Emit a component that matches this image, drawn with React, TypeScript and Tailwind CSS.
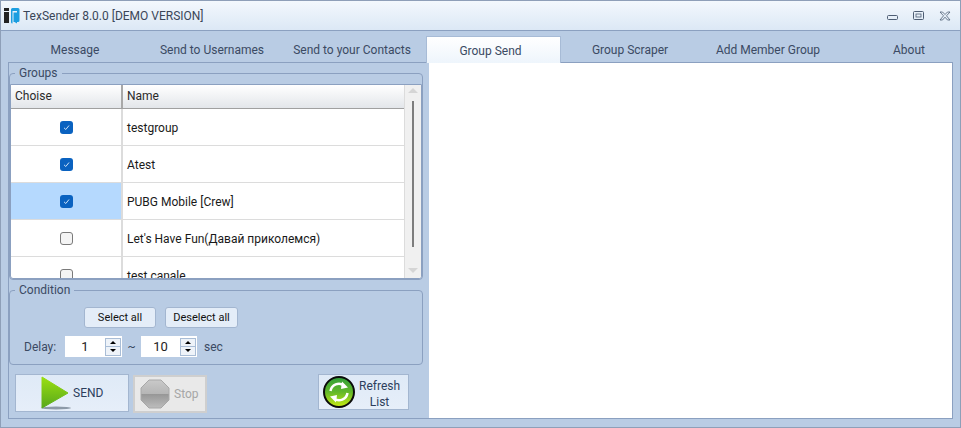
import { useState } from 'react'

const font = 'font-["Roboto","Open_Sans",sans-serif]'

const groups = [
  { name: 'testgroup', checked: true },
  { name: 'Atest', checked: true },
  { name: 'PUBG Mobile [Crew]', checked: true, selected: true },
  { name: "Let's Have Fun(Давай приколемся)", checked: false },
  { name: 'test canale', checked: false },
]

const tabs = [
  { label: 'Message', cls: 'w-[138px]' },
  { label: 'Send to Usernames', cls: 'w-[136px]' },
  { label: 'Send to your Contacts', cls: 'w-[144px] mr-[2px]' },
  { label: 'Group Send', cls: 'w-[135px] pr-[6px]', active: true },
  { label: 'Group Scraper', cls: 'w-[138px]' },
  { label: 'Add Member Group', cls: 'w-[138px]' },
  { label: 'About', cls: 'w-[144px] shrink-0' },
]

function Logo() {
  return (
    <svg width="18" height="16" viewBox="0 0 18 16" className="mt-[1px]">
      <rect x="1" y="0" width="5" height="3" fill="#222" />
      <rect x="1" y="4" width="5" height="11" fill="#222" />
      <path d="M8 1.500 Q8 0 9.500 0 H15 Q16.500 0 16.500 1.500 V12.500 Q16.500 14 15 14 L14 14 V15.500 L11.500 14 H10.500 V4.500 H14 V3 H9.500 V15.500 Q8 15.500 8 14 Z" fill="#1b9ee0" />
    </svg>
  )
}

function WindowButtons() {
  return (
    <div className="flex items-center gap-[15px] text-[#4d5d73]">
      <svg width="11" height="10" viewBox="0 0 11 10"><rect x="0.500" y="4.500" width="10" height="4" rx="1" fill="none" stroke="currentColor" /></svg>
      <svg width="11" height="10" viewBox="0 0 11 10"><rect x="0.500" y="0.500" width="10" height="8" rx="1" fill="none" stroke="currentColor" /><rect x="3" y="3" width="5" height="3" fill="none" stroke="currentColor" strokeWidth="0.800" /></svg>
      <svg width="12" height="10" viewBox="0 0 12 10"><path d="M1 1h2.500l2.500 2.500L8.500 1H11L7.500 4.800 11 9H8.500L6 6.200 3.500 9H1L4.500 4.800Z" fill="none" stroke="currentColor" strokeWidth="0.800" /></svg>
    </div>
  )
}

function Check({ checked }: { checked: boolean }) {
  if (!checked) {
    return <span className="block w-[13px] h-[13px] rounded-[3px] border border-[#7a7a7a] bg-[#f4f4f4]" />
  }
  return (
    <span className="flex items-center justify-center w-[13px] h-[13px] rounded-[3px] bg-[#0a62c0]">
      <svg width="9" height="9" viewBox="0 0 9 9"><path d="M2 4.800 L3.800 6.500 L7 2.500" fill="none" stroke="#cfe2f7" strokeWidth="1" /></svg>
    </span>
  )
}

function Spinner({ value, inputWidth }: { value: string; inputWidth: string }) {
  return (
    <div className="flex h-[21px] bg-white">
      <div className={`${inputWidth} text-center text-[13px] leading-[21px] text-[#222]`}>{value}</div>
      <div className="flex flex-col justify-center w-[16px] mr-[1px]">
        <span className="flex items-center justify-center h-[9px] border border-[#a9bdd6] bg-[#eef3f9]">
          <span className="w-0 h-0 border-x-[3px] border-x-transparent border-b-[3px] border-b-black" />
        </span>
        <span className="flex items-center justify-center h-[9px] border border-t-0 border-[#a9bdd6] bg-[#eef3f9]">
          <span className="w-0 h-0 border-x-[3px] border-x-transparent border-t-[3px] border-t-black" />
        </span>
      </div>
    </div>
  )
}

function PlayIcon() {
  return (
    <svg width="32" height="34" viewBox="0 0 32 34">
      <defs>
        <linearGradient id="play" x1="0" y1="0" x2="0" y2="1">
          <stop offset="0" stopColor="#9adf10" />
          <stop offset="1" stopColor="#58a81c" />
        </linearGradient>
      </defs>
      <ellipse cx="16" cy="32" rx="15" ry="1.500" fill="#8d9aa8" />
      <path d="M2 1 L28 17 L2 32 Z" fill="url(#play)" strokeLinejoin="round" stroke="url(#play)" strokeWidth="1" />
    </svg>
  )
}

function StopIcon() {
  return (
    <svg width="30" height="30" viewBox="0 0 30 30">
      <defs>
        <linearGradient id="stop" x1="0" y1="0" x2="0" y2="1">
          <stop offset="0" stopColor="#c9c9c9" />
          <stop offset="0.500" stopColor="#b5b5b5" />
          <stop offset="0.510" stopColor="#979797" />
          <stop offset="1" stopColor="#bdbdbd" />
        </linearGradient>
      </defs>
      <path d="M9 1 H21 L29 9 V21 L21 29 H9 L1 21 V9 Z" fill="url(#stop)" stroke="#a8a8a8" />
    </svg>
  )
}

function RefreshIcon() {
  return (
    <svg width="32" height="32" viewBox="0 0 32 32">
      <defs>
        <linearGradient id="ref" x1="0" y1="0" x2="0" y2="1">
          <stop offset="0" stopColor="#2f9e3a" />
          <stop offset="0.500" stopColor="#63b82a" />
          <stop offset="1" stopColor="#c8ec12" />
        </linearGradient>
      </defs>
      <circle cx="16" cy="16" r="15" fill="url(#ref)" stroke="#0b0b0b" strokeWidth="2" />
      <path d="M7.500 15 A8.500 8.500 0 0 1 21 9.500" fill="none" stroke="#fff" strokeWidth="2.500" />
      <path d="M24.500 17 A8.500 8.500 0 0 1 11 22.500" fill="none" stroke="#fff" strokeWidth="2.500" />
      <path d="M19 5.500 L25 11.500 L18 13 Z" fill="#fff" />
      <path d="M13 26.500 L7 20.500 L14 19 Z" fill="#fff" />
    </svg>
  )
}

export default function App() {
  const [rows] = useState(groups)

  return (
    <div className={`${font} w-[961px] h-[428px] overflow-hidden flex flex-col bg-[#b9cce4] border border-[#8e9fb8] text-[12px] text-[#3b4a63]`}>
      {/* title bar */}
      <div className="flex items-center justify-between h-[30px] shrink-0 pl-[2px] pr-[9px] bg-gradient-to-b from-[#f3f8fd] to-[#dce8f5] border-b border-[#8ba0c0]">
        <div className="flex items-center gap-[2px]">
          <Logo />
          <span className="text-[#3a4658]">TexSender 8.0.0 [DEMO VERSION]</span>
        </div>
        <WindowButtons />
      </div>

      {/* tabs */}
      <div className="flex h-[31px] shrink-0 pl-[5px] items-end">
        {tabs.map((t) => (
          <div
            key={t.label}
            className={`${t.cls} shrink-0 text-center ${
              t.active
                ? 'h-[27px] leading-[29px] bg-gradient-to-b from-white to-[#eef5fc] border border-b-0 border-[#a7bbd6] relative top-[1px] z-10'
                : 'h-[27px] leading-[31px]'
            }`}
          >
            {t.label}
          </div>
        ))}
      </div>

      {/* page */}
      <div className="flex mx-[7px] h-[357px] border-t border-l border-b border-[#8ba0c0]">
        {/* left side */}
        <div className="flex flex-col w-[414px] shrink-0">
          <fieldset className="mt-[3px] h-[214px] rounded-[4px] border border-[#8ba0c0] p-0 mx-0">
            <legend className="ml-[5px] px-[4px] leading-[15px]">Groups</legend>
            <div className="flex h-[195px] mt-[3px] bg-white border border-[#8ba0c0] rounded-b-[3px] overflow-hidden">
              <div className="flex-1 min-w-0 overflow-hidden">
                <div className="flex h-[24px] bg-gradient-to-b from-white to-[#e3e6ea] border-b border-[#a0a0a0] text-[#2a2a2a]">
                  <div className="w-[112px] pl-[4px] leading-[23px] border-r-2 border-[#a8a8a8]">Choise</div>
                  <div className="pl-[4px] leading-[23px]">Name</div>
                </div>
                {rows.map((r) => (
                  <div key={r.name} className="flex h-[37px] shrink-0 border-b border-[#dcdcdc] text-[#1a1a1a]">
                    <div className={`flex items-center justify-center w-[112px] border-r-2 border-[#dcdcdc] ${r.selected ? 'bg-[#b5d9fe]' : ''}`}>
                      <Check checked={r.checked} />
                    </div>
                    <div className="flex items-center pl-[4px] pt-[1px]">{r.name}</div>
                  </div>
                ))}
              </div>
              <div className="flex flex-col items-center w-[17px] shrink-0 bg-[#f0f0f0] border-l border-[#dcdcdc] pt-[3px] pb-[5px]">
                <span className="w-0 h-0 border-x-[5px] border-x-transparent border-b-[5px] border-b-[#d5d5d5]" />
                <span className="flex-1 w-[2px] bg-[#7d7d7d] mt-[8px] mb-[21px]" />
                <span className="w-0 h-0 border-x-[5px] border-x-transparent border-t-[5px] border-t-[#d5d5d5]" />
              </div>
            </div>
          </fieldset>

          <fieldset className="mt-[3px] h-[82px] rounded-[4px] border border-[#8ba0c0] mx-0 p-0">
            <legend className="ml-[5px] px-[4px] leading-[15px]">Condition</legend>
            <div className="flex gap-[9px] pl-[74px] pt-[9px] text-[11px]">
              <div className="flex items-center justify-center w-[72px] h-[21px] pt-[2px] rounded-[3px] border border-[#a3b6d0] bg-[#e4edf8] text-[#111]">Select all</div>
              <div className="flex items-center justify-center w-[73px] h-[21px] pt-[2px] rounded-[3px] border border-[#a3b6d0] bg-[#e4edf8] text-[#111]">Deselect all</div>
            </div>
            <div className="flex items-center pl-[14px] pt-[8px]">
              <span className="w-[41px] mt-[1px]">Delay:</span>
              <Spinner value="1" inputWidth="w-[40px]" />
              <span className="w-[19px] text-center">~</span>
              <Spinner value="10" inputWidth="w-[39px]" />
              <span className="ml-[7px]">sec</span>
            </div>
          </fieldset>

          <div className="flex items-start mt-[9px] pl-[6px]">
            <div className="flex items-center w-[114px] h-[38px] border border-[#a3b6d0] bg-gradient-to-b from-[#dfeaf7] to-[#e6eef9] pl-[24px] gap-[1px] text-[#2c3e5c]">
              <PlayIcon />
              <span>SEND</span>
            </div>
            <div className="flex items-center w-[74px] h-[38px] ml-[4px] mt-[1px] border-2 border-[#cfcfcf] bg-[#e9e9e9] pl-[5px] gap-[4px] text-[#a6a6a6]">
              <StopIcon />
              <span>Stop</span>
            </div>
            <div className="flex items-center w-[91px] h-[36px] ml-[111px] border border-[#a3b6d0] bg-gradient-to-b from-[#dfeaf7] to-[#e6eef9] pl-[4px] gap-[4px] text-[#2c3e5c]">
              <RefreshIcon />
              <span className="text-center leading-[16px] pt-[3px]">Refresh<br />List</span>
            </div>
          </div>
        </div>

        {/* right side */}
        <div className="w-[524px] ml-[6px] bg-white border-r border-[#8ba0c0]" />
      </div>
    </div>
  )
}
